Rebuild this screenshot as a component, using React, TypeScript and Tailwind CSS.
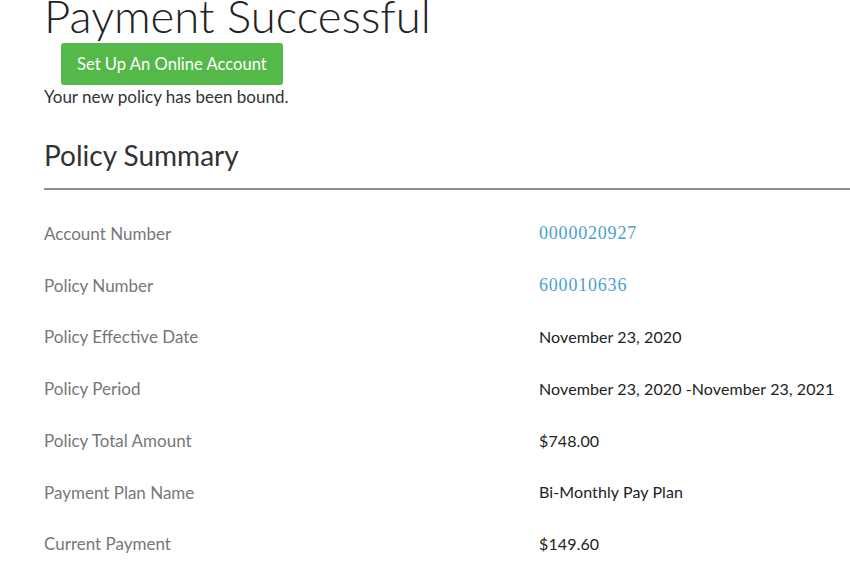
import React from "react";

const rows: { label: string; value: string; link?: boolean }[] = [
  { label: "Account Number", value: "0000020927", link: true },
  { label: "Policy Number", value: "600010636", link: true },
  { label: "Policy Effective Date", value: "November 23, 2020" },
  { label: "Policy Period", value: "November 23, 2020 -November 23, 2021" },
  { label: "Policy Total Amount", value: "$748.00" },
  { label: "Payment Plan Name", value: "Bi-Monthly Pay Plan" },
  { label: "Current Payment", value: "$149.60" },
];

const App = () => {
  return (
    <div className="min-h-screen bg-white pl-[44px] overflow-hidden font-['Lato','Open_Sans',sans-serif]">
      <h1 className="text-[45.5px] font-light leading-[46px] -mt-[7px] text-[#222]">
        Payment Successful
      </h1>

      <div className="pl-[17px] pt-[4px]">
        <button className="h-[42px] px-[16px] rounded-[3px] bg-[#55b949] text-white text-[16.6px]">
          Set Up An Online Account
        </button>
      </div>
      <p className="text-[17px] text-[#333] leading-[24px]">
        Your new policy has been bound.
      </p>

      <h2 className="text-[28px] text-[#333] leading-[32px] mt-[30px]">Policy Summary</h2>
      <div className="mt-[17px] h-[2px] bg-[#8f8f8f]" />

      <div className="mt-[18px] flex flex-col">
        {rows.map((r) => (
          <div key={r.label} className="flex items-center h-[51.7px]">
            <div className="w-[495px] text-[#777] text-[17px]">{r.label}</div>
            <div
              className={
                r.link
                  ? "text-[#4a9fd1] text-[18px] tracking-[0.8px] font-['Liberation_Serif','DejaVu_Serif',serif]"
                  : "text-[#222] text-[16px] tracking-[0.1px]"
              }
            >
              {r.value}
            </div>
          </div>
        ))}
      </div>
    </div>
  );
};

export default App;
